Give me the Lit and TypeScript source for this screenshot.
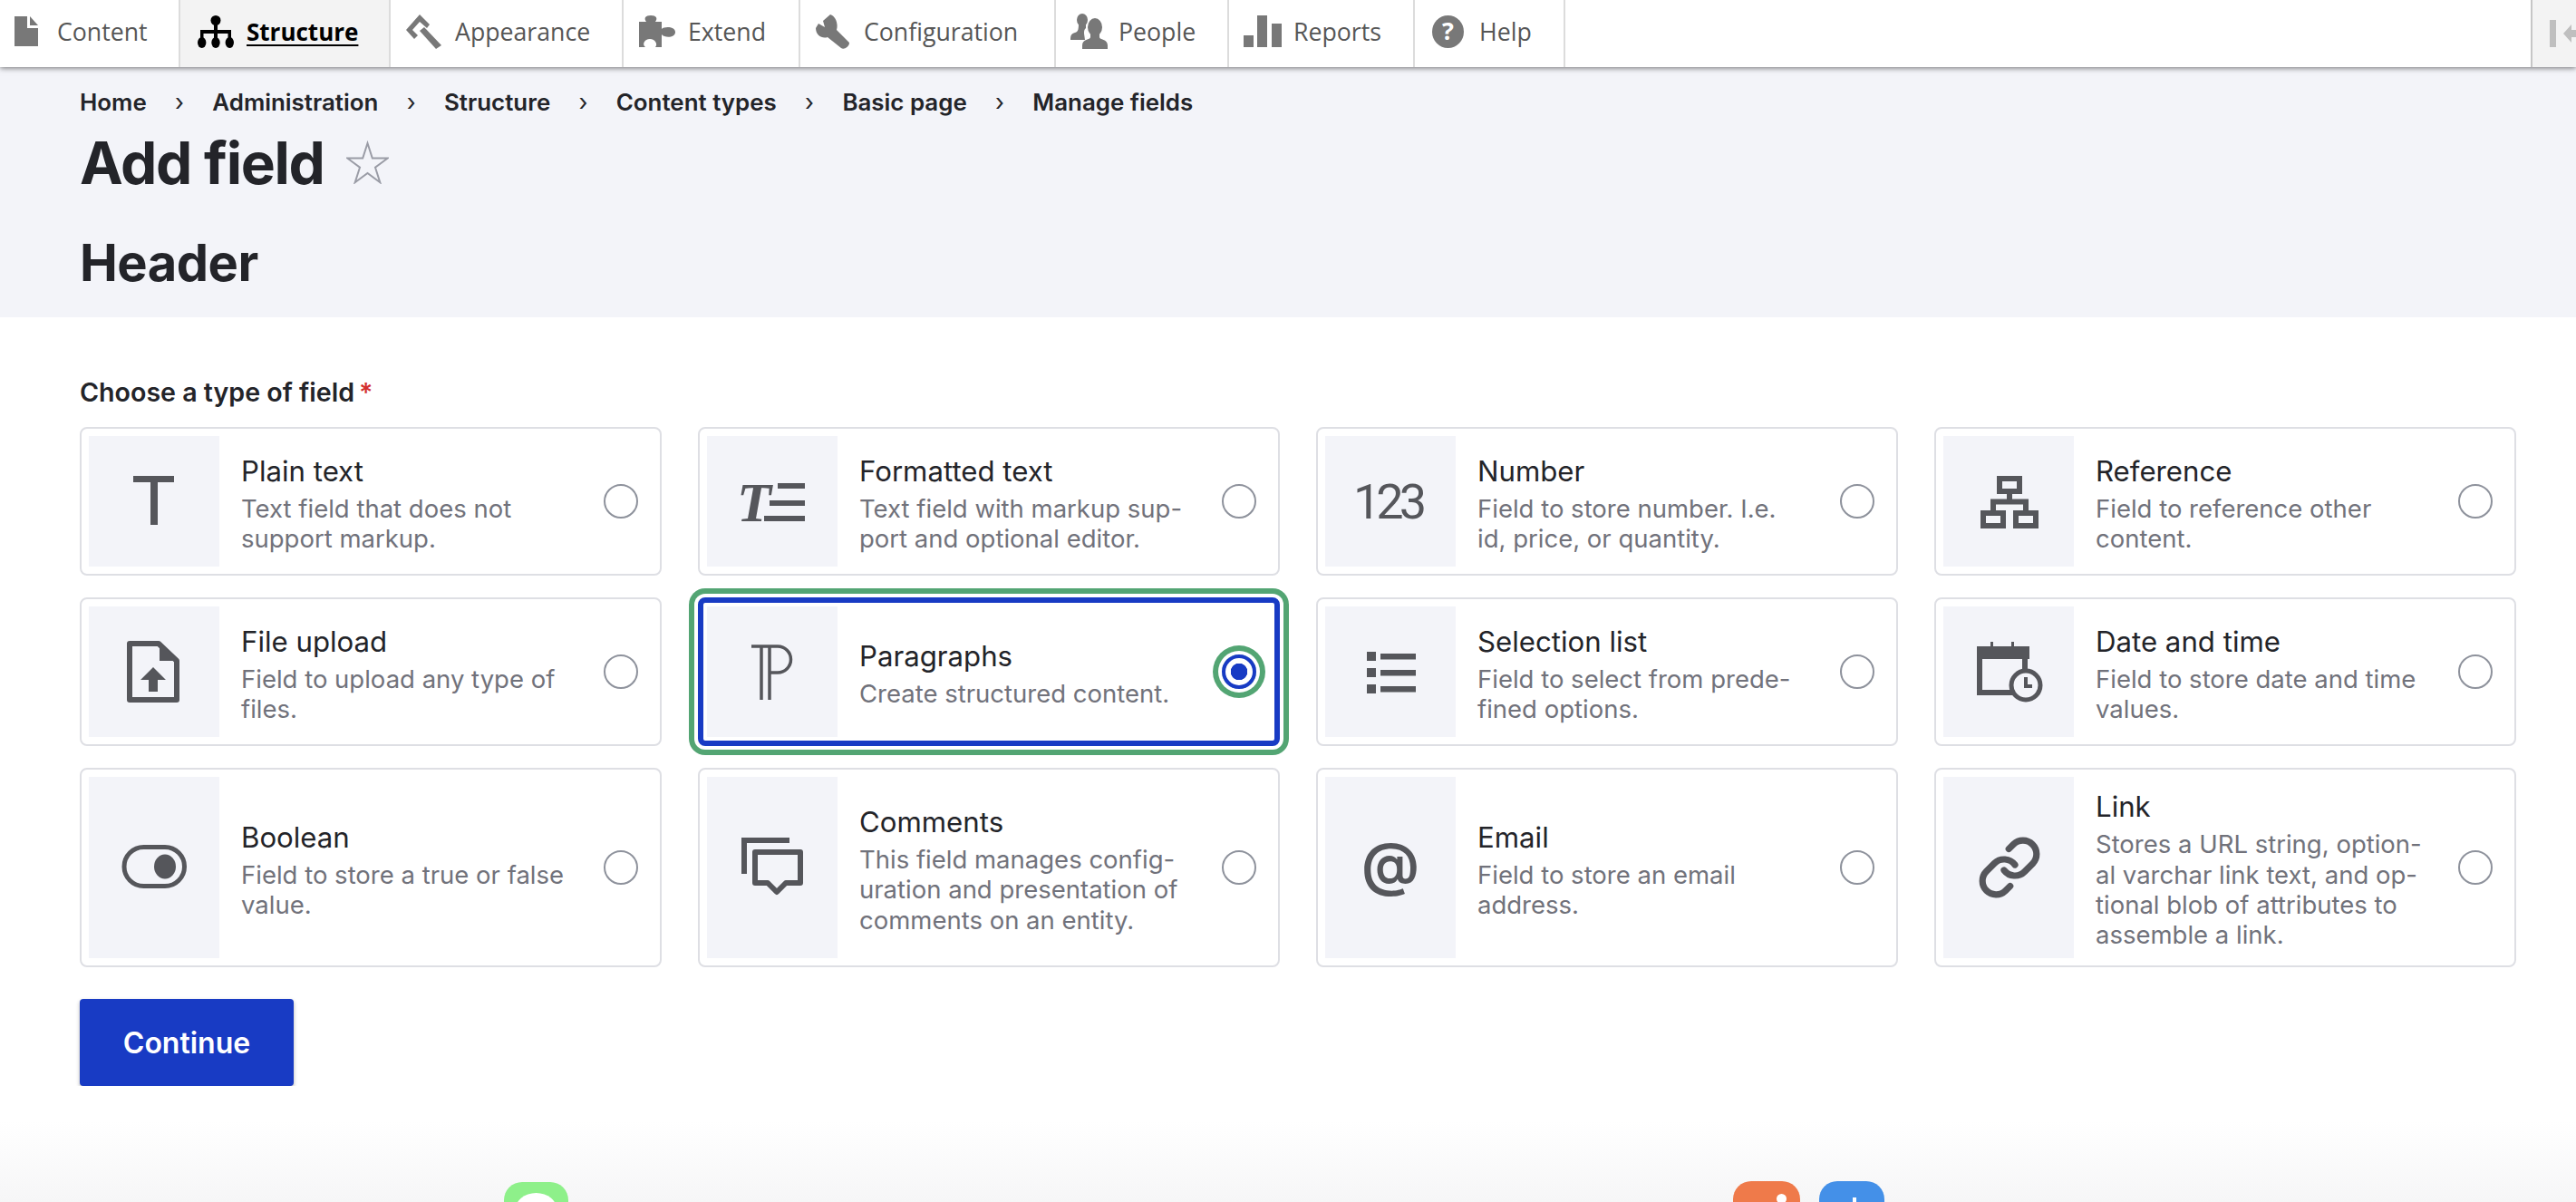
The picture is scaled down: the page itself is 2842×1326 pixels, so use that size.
import { LitElement, css, html, svg } from "lit";
import { customElement } from "lit/decorators.js";
import { styleMap } from "lit/directives/style-map.js";

const navIcons: Record<string, unknown> = {
  content: svg`<svg width="26" height="34" viewBox="0 0 26 34"><path d="M0 0h14v13h12v20H0z"/><path d="M17 0l9 10h-9z"/></svg>`,
  structure: svg`<svg width="40" height="36" viewBox="0 0 40 36"><circle cx="20" cy="5.5" r="5.5"/><rect x="18" y="8" width="4" height="18"/><rect x="3" y="16" width="34" height="4"/><rect x="3" y="16" width="3.5" height="12"/><rect x="33.5" y="16" width="3.5" height="12"/><ellipse cx="4.7" cy="30" rx="4.7" ry="6"/><ellipse cx="20" cy="30" rx="4.7" ry="6"/><ellipse cx="35.3" cy="30" rx="4.7" ry="6"/></svg>`,
  appearance: svg`<svg width="39" height="38" viewBox="0 0 39 38"><path d="M15 0L0 17l9 10 4-4-6-6 8-9 8 7 3-4z"/><path d="M15 18l5-4 19 20-6 4z"/></svg>`,
  extend: svg`<svg width="40" height="35" viewBox="0 0 40 35"><path d="M0 7h8C5 3 7 0 13 0s8 3 5 7h7v8c3-3 15-3 15 3.500S28 25 25 21v14h-7c3-3 0-9-6-9s-9 6-5 9H0z"/></svg>`,
  config: svg`<svg width="38" height="38" viewBox="0 0 38 38"><path d="M16 0L8 7l2 7-7-4-3 5c0 8 7 12 13 10l15 12c3 2 9-1 9-6L23 17c2-7-1-15-7-17z"/></svg>`,
  people: svg`<svg width="41" height="39" viewBox="0 0 41 39"><ellipse cx="13" cy="7" rx="6" ry="7"/><path d="M9 10h8v6c-2 2-2 3-2 6l1 7H0c0-5 1-7 5-8 4-1 4-5 4-11z"/><ellipse cx="27" cy="15" rx="8" ry="10"/><path d="M22 20h10v6c0 3 9 2 9 9v4H13v-4c0-7 9-6 9-9z"/></svg>`,
  reports: svg`<svg width="42" height="35" viewBox="0 0 42 35"><path d="M0 22h11v13H0zM15 0h11v35H15zM31 9h11v26H31z"/></svg>`,
  help: svg`<svg width="35" height="36" viewBox="0 0 35 36"><ellipse cx="17.500" cy="18" rx="17.500" ry="18"/><text x="17.500" y="27" text-anchor="middle" font-size="27" font-weight="700" font-family="Open Sans, sans-serif" fill="#fff">?</text></svg>`,
};

const nav = [
  { key: "content", label: "Content", width: 199, left: 16, gap: 21 },
  { key: "structure", label: "Structure", width: 232, left: 19, gap: 14, active: true },
  { key: "appearance", label: "Appearance", width: 257, left: 17, gap: 15 },
  { key: "extend", label: "Extend", width: 195, left: 17, gap: 14 },
  { key: "config", label: "Configuration", width: 282, left: 17, gap: 15 },
  { key: "people", label: "People", width: 191, left: 16, gap: 12 },
  { key: "reports", label: "Reports", width: 205, left: 16, gap: 13 },
  { key: "help", label: "Help", width: 166, left: 19, gap: 17 },
];

const crumbs = ["Home", "Administration", "Structure", "Content types", "Basic page", "Manage fields"];

// all field icons are drawn on the 144x144 box of the thumbnail
const fieldIcons: Record<string, unknown> = {
  plain: svg`<rect x="49" y="44" width="45" height="7"/><rect x="68" y="44" width="8" height="54"/>`,
  formatted: svg`<text x="33" y="94" font-size="62" font-weight="700" font-style="italic" font-family="Liberation Serif, serif">T</text><rect x="78" y="52" width="30" height="6"/><rect x="69" y="71" width="39" height="6"/><rect x="63" y="88" width="45" height="6"/>`,
  number: svg`<text x="69" y="91" text-anchor="middle" font-size="54" letter-spacing="-5" font-family="Roboto, sans-serif">123</text>`,
  reference: svg`<g fill="none" stroke="#55565b" stroke-width="6"><rect x="62" y="47" width="22" height="14"/><rect x="44" y="85" width="22" height="14"/><rect x="80" y="85" width="22" height="14"/><path d="M73 62v10M55 83V72.500h36V83"/></g>`,
  file: svg`<path d="M45 41h32l20 19v43H45z" fill="none" stroke="#55565b" stroke-width="6" stroke-linejoin="round"/><path d="M78 40l21 20H78z"/><path d="M71 67l14 14h-9v13H66V81h-9z"/>`,
  paragraphs: svg`<path d="M49 44h29a14.500 14.500 0 0 1 0 29H69M60 44v59M69 44v59" fill="none" stroke="#55565b" stroke-width="3.500"/>`,
  list: svg`<path d="M46 50h10v10H46zM46 68h10v10H46zM46 86h10v10H46zM61 52h39v6.500H61zM61 70h39v6.500H61zM61 88h39v6.500H61z"/>`,
  date: svg`<path d="M37 44h58v14H37z"/><path d="M52 39h3v6h-3zM75 39h3v6h-3z"/><path d="M40 50v45h50V50" fill="none" stroke="#55565b" stroke-width="6"/><circle cx="91" cy="87" r="16" fill="#f3f4f9" stroke="#55565b" stroke-width="5"/><path d="M91 78v10h7" fill="none" stroke="#55565b" stroke-width="4"/>`,
  boolean: svg`<rect x="39" y="49.500" width="66.500" height="43" rx="21.500" fill="none" stroke="#55565b" stroke-width="5"/><ellipse cx="84" cy="71" rx="12" ry="13.500"/>`,
  comments: svg`<path d="M91 42H41v37" fill="none" stroke="#55565b" stroke-width="6"/><path d="M53 55h50v34H87l-10 10-10-10H53z" fill="none" stroke="#55565b" stroke-width="6" stroke-linejoin="round"/>`,
  email: svg`<text x="72" y="91" text-anchor="middle" font-size="64" font-weight="600" font-family="Inter, sans-serif">@</text>`,
  link: svg`<g transform="translate(37 36) scale(3)" fill="none" stroke="#55565b" stroke-width="2.400" stroke-linecap="round" stroke-linejoin="round"><path d="M10 13a5 5 0 0 0 7.540.540l3-3a5 5 0 0 0-7.070-7.070l-1.720 1.710"/><path d="M14 11a5 5 0 0 0-7.540-.540l-3 3a5 5 0 0 0 7.070 7.070l1.710-1.710"/></g>`,
};

const fields = [
  { icon: "plain", title: "Plain text", lines: ["Text field that does not", "support markup."] },
  { icon: "formatted", title: "Formatted text", lines: ["Text field with markup sup-", "port and optional editor."] },
  { icon: "number", title: "Number", lines: ["Field to store number. I.e.", "id, price, or quantity."] },
  { icon: "reference", title: "Reference", lines: ["Field to reference other", "content."] },
  { icon: "file", title: "File upload", lines: ["Field to upload any type of", "files."] },
  { icon: "paragraphs", title: "Paragraphs", lines: ["Create structured content."], selected: true },
  { icon: "list", title: "Selection list", lines: ["Field to select from prede-", "fined options."] },
  { icon: "date", title: "Date and time", lines: ["Field to store date and time", "values."] },
  { icon: "boolean", title: "Boolean", lines: ["Field to store a true or false", "value."] },
  { icon: "comments", title: "Comments", lines: ["This field manages config-", "uration and presentation of", "comments on an entity."] },
  { icon: "email", title: "Email", lines: ["Field to store an email", "address."] },
  { icon: "link", title: "Link", lines: ["Stores a URL string, option-", "al varchar link text, and op-", "tional blob of attributes to", "assemble a link."] },
];

@customElement("app-root")
export class AppRoot extends LitElement {
  static styles = css`
    :host {
      display: flex;
      flex-direction: column;
      height: 1326px;
      overflow: hidden;
      background: #fff;
      font-family: Inter, "Liberation Sans", sans-serif;
      color: #232429;
    }

    .toolbar {
      position: relative;
      z-index: 2;
      display: flex;
      flex: none;
      height: 74px;
      background: #fff;
      box-shadow: 0 1px 6px rgba(0, 0, 0, 0.55);
      font-family: "Open Sans", sans-serif;
      font-size: 26.700px;
      color: #565656;
    }
    .tab {
      display: flex;
      align-items: center;
      box-sizing: border-box;
      flex: none;
      padding-bottom: 5px;
      border-right: 2px solid #dcdcdc;
    }
    .tab svg {
      flex: none;
      display: block;
      fill: #787878;
    }
    .tab.active {
      background: #f3f3f3;
      color: #000;
      font-size: 26px;
      font-weight: 700;
      text-decoration: underline;
      text-underline-offset: 4px;
    }
    .tab.active svg {
      fill: #000;
    }
    .collapse {
      display: flex;
      align-items: center;
      flex: none;
      box-sizing: border-box;
      width: 50px;
      margin-left: auto;
      padding-left: 19px;
      background: #f3f3f3;
      border-left: 2px solid #c6c6c6;
    }

    .head {
      flex: none;
      box-sizing: border-box;
      height: 276px;
      padding: 23px 0 0 88px;
      background: #f3f4f9;
    }
    .crumbs {
      display: flex;
      align-items: center;
      height: 30px;
      font-size: 25.900px;
      font-weight: 600;
    }
    .sep {
      width: 72.600px;
      text-align: center;
      font-weight: 400;
    }
    h1 {
      display: flex;
      align-items: center;
      gap: 24px;
      height: 76px;
      margin: 14px 0 0;
      font-size: 64px;
      font-weight: 700;
      letter-spacing: -1.300px;
    }
    h2 {
      margin: 41px 0 0;
      font-size: 56px;
      line-height: 64px;
      font-weight: 700;
      letter-spacing: -0.500px;
    }

    .form {
      flex: none;
      padding: 66px 66px 0 88px;
    }
    .label {
      height: 34px;
      line-height: 34px;
      font-size: 28.600px;
      font-weight: 600;
    }
    .label span {
      margin-left: 5px;
      color: #d32f2f;
    }
    .grid {
      display: grid;
      grid-template-columns: repeat(4, 642px);
      grid-template-rows: 164px 164px 220px;
      gap: 24px 40px;
      margin-top: 21px;
    }
    .card {
      display: flex;
      align-items: center;
      box-sizing: border-box;
      padding: 8px;
      border: 2px solid #dedfe4;
      border-radius: 8px;
      background: #fff;
    }
    .card.selected {
      padding: 4px;
      border: 6px solid #183bc4;
      box-shadow: 0 0 0 4px #fff, 0 0 0 10px #53a573;
    }
    .thumb {
      display: flex;
      align-items: center;
      justify-content: center;
      flex: none;
      align-self: stretch;
      width: 144px;
      background: #f3f4f9;
      fill: #55565b;
    }
    .text {
      flex: 1;
      margin-left: 24px;
    }
    .title {
      font-size: 31.200px;
      line-height: 50px;
    }
    .desc {
      font-size: 27.500px;
      line-height: 33.350px;
      color: #71727b;
    }
    .radio {
      flex: none;
      box-sizing: border-box;
      width: 38px;
      height: 38px;
      margin-right: 16px;
      border: 2px solid #8e929c;
      border-radius: 50%;
      background: #fff;
    }
    .card.selected .radio {
      border: 4px solid #183bc4;
      background: radial-gradient(circle, #183bc4 0 9px, #fff 9.500px);
      box-shadow: 0 0 0 4px #fff, 0 0 0 10px #53a573;
    }
    .continue {
      display: block;
      width: 236px;
      height: 96px;
      margin-top: 35px;
      padding: 0;
      border: 0;
      border-radius: 4px;
      background: #183bc4;
      box-shadow: 0 2px 4px rgba(0, 0, 0, 0.3);
      color: #fff;
      font-family: inherit;
      font-size: 32px;
      font-weight: 600;
    }

    .dock {
      position: relative;
      flex: 1;
      background: linear-gradient(#fff 30%, #f6f6f7);
    }
    .app {
      position: absolute;
      top: 106px;
      height: 40px;
      overflow: hidden;
      border-radius: 20px 20px 0 0;
    }
    .app::after {
      content: "";
      position: absolute;
      border-radius: 50%;
      background: #fff;
    }
    .messages {
      left: 556px;
      width: 71px;
      background: #8ef08a;
    }
    .messages::after {
      left: 12px;
      top: 12px;
      width: 47px;
      height: 40px;
    }
    .pages {
      left: 1912px;
      top: 105px;
      width: 74px;
      background: #ef7a4a;
    }
    .pages::after {
      left: 48px;
      top: 14px;
      width: 11px;
      height: 11px;
    }
    .appstore {
      left: 2007px;
      top: 105px;
      width: 72px;
      background: #4490e8;
    }
    .appstore::after {
      left: 37px;
      top: 18px;
      width: 4px;
      height: 12px;
      border-radius: 0;
    }
  `;

  render() {
    return html`
      <div class="toolbar">
        ${nav.map(
          (n) => html`<div
            class="tab ${n.active ? "active" : ""}"
            style=${styleMap({ width: `${n.width}px`, paddingLeft: `${n.left}px`, gap: `${n.gap}px` })}
          >
            ${navIcons[n.key]}<span>${n.label}</span>
          </div>`
        )}
        <div class="collapse">
          <svg width="29" height="30" viewBox="0 0 29 30" fill="#bfbfbf"><rect width="7" height="30"/><path d="M15 15l9-10v6h5v8h-5v6z"/></svg>
        </div>
      </div>

      <div class="head">
        <div class="crumbs">
          ${crumbs.map(
            (c, i) => html`${i ? html`<span class="sep">›</span>` : ""}<span>${c}</span>`
          )}
        </div>
        <h1>
          Add field
          <svg width="47" height="48" viewBox="0 0 47 48"><path d="M23.500 3l5.300 16.500h17L32 29.700l5.300 16.500-13.800-10.200L9.700 46.200 15 29.700 1.200 19.500h17z" fill="none" stroke="#9a9ca6" stroke-width="2"/></svg>
        </h1>
        <h2>Header</h2>
      </div>

      <div class="form">
        <div class="label">Choose a type of field<span>*</span></div>
        <div class="grid">
          ${fields.map(
            (f) => html`<div class="card ${f.selected ? "selected" : ""}">
              <div class="thumb">
                <svg width="144" height="144" viewBox="0 0 144 144">${fieldIcons[f.icon]}</svg>
              </div>
              <div class="text">
                <div class="title">${f.title}</div>
                <div class="desc">${f.lines.map((l) => html`<div>${l}</div>`)}</div>
              </div>
              <div class="radio"></div>
            </div>`
          )}
        </div>
        <button class="continue">Continue</button>
      </div>

      <div class="dock">
        <div class="app messages"></div>
        <div class="app pages"></div>
        <div class="app appstore"></div>
      </div>
    `;
  }
}
